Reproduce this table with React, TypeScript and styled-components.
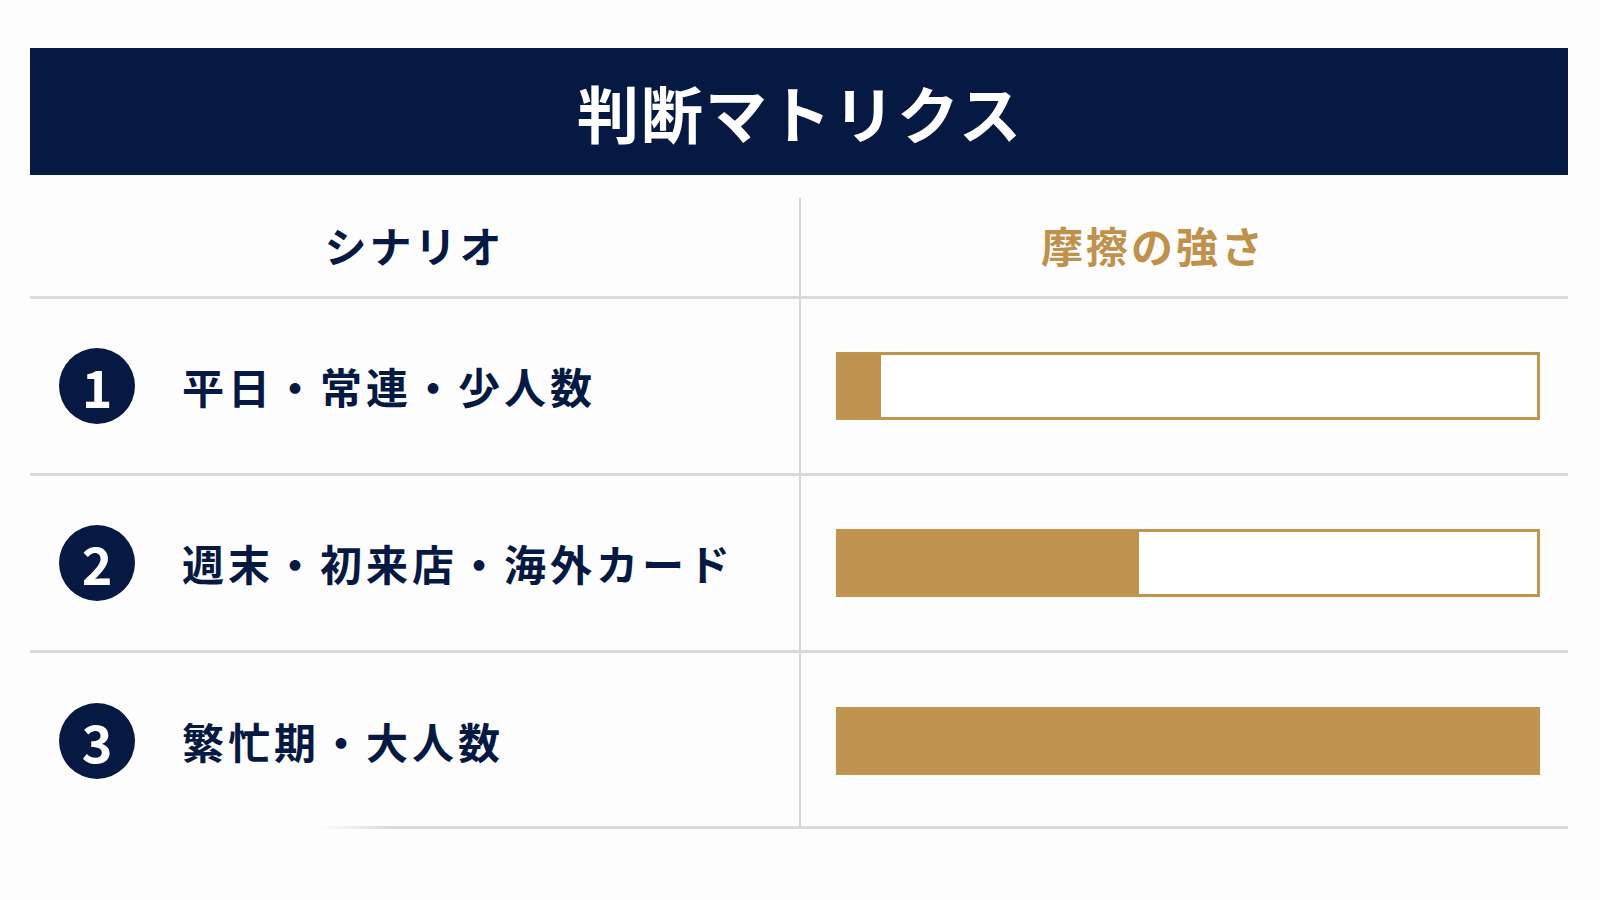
import React from "react";
import styled, { createGlobalStyle } from "styled-components";

const GlobalStyle = createGlobalStyle`
  html, body {
    margin: 0;
    padding: 0;
    background: #fdfdfd;
  }
  body {
    font-family: "Noto Sans CJK JP", "Noto Sans", sans-serif;
  }
`;

const Page = styled.div`
  width: 1600px;
  height: 900px;
  box-sizing: border-box;
  padding: 48px 32px 0 30px;
  background: #fdfdfd;
`;

const Banner = styled.div`
  height: 127px;
  background: #061942;
  display: flex;
  align-items: center;
  justify-content: center;
`;

const Title = styled.h1`
  margin: 0;
  color: #ffffff;
  font-family: "Noto Sans CJK JP", sans-serif;
  font-weight: 700;
  font-size: 62px;
  letter-spacing: 2px;
  line-height: 1;
  padding-left: 2px;
`;

const Table = styled.div`
  position: relative;
  display: grid;
  grid-template-columns: 769px 769px;
  margin-top: 23px;
  &::after {
    content: "";
    position: absolute;
    left: 0;
    right: 0;
    bottom: 0;
    height: 3px;
    background: linear-gradient(
      to right,
      rgba(218, 218, 222, 0) 290px,
      #dadadd 360px
    );
  }
`;

const HeadCell = styled.div<{ $right?: boolean; $gold?: boolean }>`
  height: 101px;
  display: flex;
  align-items: center;
  justify-content: center;
  border-bottom: 3px solid #dadadd;
  border-left: ${(p) => (p.$right ? "2px solid #d6d6d9" : "none")};
  box-sizing: border-box;
  padding-right: ${(p) => (p.$right ? "62px" : "0")};
  padding-bottom: 6px;
  font-weight: 700;
  font-size: 42px;
  letter-spacing: 3px;
  color: ${(p) => (p.$gold ? "#c0914a" : "#061942")};
`;

const ScenarioCell = styled.div<{ $last?: boolean }>`
  height: ${(p) => (p.$last ? "176px" : "177px")};
  box-sizing: border-box;
  border-bottom: ${(p) => (p.$last ? "none" : "3px solid #dadadd")};
  display: flex;
  align-items: center;
  padding-left: 29px;
  gap: 47px;
`;

const BarCell = styled.div<{ $last?: boolean }>`
  height: ${(p) => (p.$last ? "176px" : "177px")};
  box-sizing: border-box;
  border-bottom: ${(p) => (p.$last ? "none" : "3px solid #dadadd")};
  border-left: 2px solid #d6d6d9;
  display: flex;
  align-items: center;
  padding-left: 35px;
  padding-right: 28px;
`;

const Badge = styled.div`
  width: 76px;
  height: 76px;
  border-radius: 50%;
  background: #061942;
  color: #ffffff;
  display: flex;
  align-items: center;
  justify-content: center;
  font-family: "Noto Sans CJK JP", sans-serif;
  font-weight: 700;
  font-size: 52px;
  line-height: 1;
  flex-shrink: 0;
`;

const Label = styled.span`
  font-weight: 700;
  font-size: 42px;
  letter-spacing: 4px;
  color: #061942;
  line-height: 1;
`;

const BarTrack = styled.div`
  width: 100%;
  height: 68px;
  box-sizing: border-box;
  border: 3px solid #c0954f;
  background: #ffffff;
  display: flex;
`;

const BarFill = styled.div`
  height: 100%;
  background: #bd934f;
`;

const rows = [
  { n: "1", label: "平日・常連・少人数", pct: 6 },
  { n: "2", label: "週末・初来店・海外カード", pct: 43 },
  { n: "3", label: "繁忙期・大人数", pct: 100 },
];

export default function App() {
  return (
    <>
      <GlobalStyle />
      <Page>
        <Banner>
          <Title>判断マトリクス</Title>
        </Banner>
        <Table>
          <HeadCell>シナリオ</HeadCell>
          <HeadCell $right $gold>
            摩擦の強さ
          </HeadCell>
          {rows.map((r, i) => {
            const last = i === rows.length - 1;
            return (
              <React.Fragment key={r.n}>
                <ScenarioCell $last={last}>
                  <Badge>{r.n}</Badge>
                  <Label>{r.label}</Label>
                </ScenarioCell>
                <BarCell $last={last}>
                  <BarTrack>
                    <BarFill style={{ width: `${r.pct}%` }} />
                  </BarTrack>
                </BarCell>
              </React.Fragment>
            );
          })}
        </Table>
      </Page>
    </>
  );
}
